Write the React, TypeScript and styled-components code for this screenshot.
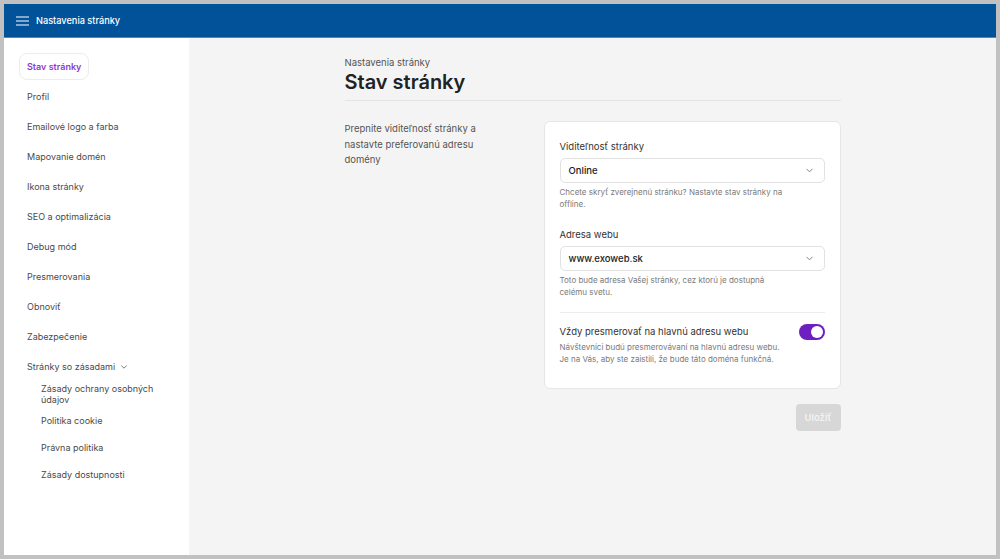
import React, { useState } from 'react'
import styled, { createGlobalStyle } from 'styled-components'

const GlobalStyle = createGlobalStyle`
	html, body {
		margin: 0;
		padding: 0;
		background: #c1c1c1;
		font-family: Inter, 'Noto Sans', sans-serif;
	}
	* {
		box-sizing: border-box;
	}
`

const Frame = styled.div`
	margin: 4px;
	width: 992px;
	height: 551px;
	display: flex;
	flex-direction: column;
	background: #f4f4f4;
	overflow: hidden;
`

const Header = styled.header`
	height: 34px;
	flex-shrink: 0;
	background: #02529a;
	border-bottom: 1px solid #4d86bb;
	display: flex;
	align-items: center;
	gap: 7px;
	padding-left: 12px;
	color: #fff;
	font-size: 9.2px;
	font-weight: 500;
`

const Body = styled.div`
	flex: 1;
	display: flex;
	min-height: 0;
`

const Sidebar = styled.nav`
	width: 185px;
	flex-shrink: 0;
	background: #fff;
	padding: 15px 15px 0;
	display: flex;
	flex-direction: column;
	gap: 3px;
`

const NavItem = styled.div<{ active?: boolean }>`
	height: 27px;
	display: flex;
	align-items: center;
	gap: 5px;
	align-self: flex-start;
	padding: 0 7px;
	border-radius: 8px;
	border: 1px solid ${({ active }) => (active ? '#ececec' : 'transparent')};
	font-size: 9px;
	font-weight: ${({ active }) => (active ? 600 : 400)};
	color: ${({ active }) => (active ? '#8a3ad3' : '#4a4a4a')};
`

const SubList = styled.div`
	display: flex;
	flex-direction: column;
	gap: 0;
	margin-top: -3px;
	padding-left: 22px;
`

const SubItem = styled.div`
	min-height: 27px;
	max-width: 128px;
	display: flex;
	align-items: center;
	font-size: 9px;
	line-height: 11px;
	color: #4a4a4a;
`

const Main = styled.main`
	flex: 1;
	display: flex;
	justify-content: center;
	padding-top: 19px;
`

const Content = styled.div`
	width: 496px;
	display: flex;
	flex-direction: column;
`

const Breadcrumb = styled.div`
	font-size: 9.5px;
	line-height: 12px;
	color: #555;
`

const Title = styled.h1`
	margin: 1px 0 0;
	font-size: 20px;
	line-height: 24px;
	font-weight: 600;
	color: #222;
	padding-bottom: 6px;
	border-bottom: 1px solid #e4e4e4;
`

const Section = styled.div`
	display: grid;
	grid-template-columns: 1fr 297px;
	margin-top: 20px;
`

const Description = styled.p`
	margin: 0;
	max-width: 140px;
	font-size: 9.5px;
	line-height: 15.5px;
	color: #555;
`

const Aside = styled.div`
	display: flex;
	flex-direction: column;
	align-items: flex-end;
	gap: 15px;
`

const Card = styled.div`
	width: 100%;
	background: #fff;
	border: 1px solid #e6e6e6;
	border-radius: 6px;
	padding: 18px 15px 23px;
	display: flex;
	flex-direction: column;
`

const Label = styled.div`
	font-size: 9.5px;
	line-height: 13px;
	color: #333;
	margin-bottom: 5px;
`

const Select = styled.div`
	height: 25px;
	border: 1px solid #e2e2e2;
	border-radius: 5px;
	display: flex;
	align-items: center;
	justify-content: space-between;
	padding: 0 10px 0 8px;
	font-size: 9.5px;
	font-weight: 500;
	color: #222;
`

const Help = styled.div<{ spaced?: boolean; tight?: boolean }>`
	margin-top: ${({ tight }) => (tight ? '1px' : '3px')};
	margin-bottom: ${({ spaced }) => (spaced ? '18px' : '0')};
	max-width: 228px;
	font-size: 8px;
	line-height: 12px;
	color: #7a7a7a;
`

const Divider = styled.hr`
	border: none;
	border-top: 1px solid #ececec;
	margin: 14px 0 10px;
`

const ToggleRow = styled.div`
	height: 17px;
	display: flex;
	align-items: center;
	justify-content: space-between;
	font-size: 9.5px;
	color: #333;
`

const Toggle = styled.button<{ on: boolean }>`
	width: 26px;
	height: 16px;
	border: none;
	padding: 0;
	border-radius: 8px;
	background: ${({ on }) => (on ? '#6d1fc0' : '#ccc')};
	position: relative;
	cursor: pointer;

	&::after {
		content: '';
		position: absolute;
		top: 2px;
		left: ${({ on }) => (on ? '12px' : '2px')};
		width: 12px;
		height: 12px;
		border-radius: 50%;
		background: #fff;
	}
`

const SaveButton = styled.button`
	width: 45px;
	height: 27px;
	border: none;
	border-radius: 4px;
	background: #d7d7d7;
	color: #f2f2f2;
	font-family: inherit;
	font-size: 9.5px;
	font-weight: 600;
`

const Hamburger = () => (
	<svg width="13" height="10" viewBox="0 0 13 10" fill="none">
		<path d="M0 1h13M0 5h13M0 9h13" stroke="#fff" strokeWidth="1.2" />
	</svg>
)

const Chevron = ({ size = 9, color = '#777' }: { size?: number; color?: string }) => (
	<svg width={size} height={size} viewBox="0 0 10 10" fill="none">
		<path d="M2 3.5l3 3 3-3" stroke={color} strokeWidth="1" strokeLinecap="round" />
	</svg>
)

const navItems = [
	'Profil',
	'Emailové logo a farba',
	'Mapovanie domén',
	'Ikona stránky',
	'SEO a optimalizácia',
	'Debug mód',
	'Presmerovania',
	'Obnoviť',
	'Zabezpečenie',
]

const subItems = [
	'Zásady ochrany osobných údajov',
	'Politika cookie',
	'Právna politika',
	'Zásady dostupnosti',
]

export default function App() {
	const [redirect, setRedirect] = useState(true)

	return (
		<>
			<GlobalStyle />
			<Frame>
				<Header>
					<Hamburger />
					Nastavenia stránky
				</Header>
				<Body>
					<Sidebar>
						<NavItem active>Stav stránky</NavItem>
						{navItems.map((item) => (
							<NavItem key={item}>{item}</NavItem>
						))}
						<NavItem>
							Stránky so zásadami
							<Chevron size={8} color="#555" />
						</NavItem>
						<SubList>
							{subItems.map((item) => (
								<SubItem key={item}>{item}</SubItem>
							))}
						</SubList>
					</Sidebar>
					<Main>
						<Content>
							<Breadcrumb>Nastavenia stránky</Breadcrumb>
							<Title>Stav stránky</Title>
							<Section>
								<Description>
									Prepnite viditeľnosť stránky a nastavte preferovanú adresu domény
								</Description>
								<Aside>
									<Card>
										<Label>Viditeľnosť stránky</Label>
										<Select>
											Online
											<Chevron />
										</Select>
										<Help spaced>
											Chcete skryť zverejnenú stránku? Nastavte stav stránky na offline.
										</Help>
										<Label>Adresa webu</Label>
										<Select>
											www.exoweb.sk
											<Chevron />
										</Select>
										<Help>
											Toto bude adresa Vašej stránky, cez ktorú je dostupná celému svetu.
										</Help>
										<Divider />
										<ToggleRow>
											Vždy presmerovať na hlavnú adresu webu
											<Toggle on={redirect} onClick={() => setRedirect(!redirect)} />
										</ToggleRow>
										<Help tight>
											Návštevníci budú presmerovávaní na hlavnú adresu webu.
											<br />
											Je na Vás, aby ste zaistili, že bude táto doména funkčná.
										</Help>
									</Card>
									<SaveButton>Uložiť</SaveButton>
								</Aside>
							</Section>
						</Content>
					</Main>
				</Body>
			</Frame>
		</>
	)
}
